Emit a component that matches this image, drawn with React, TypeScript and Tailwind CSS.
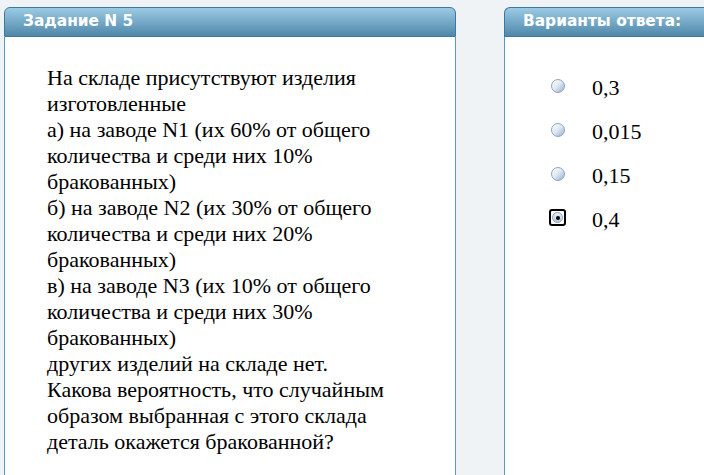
import React from "react";

const lines = [
  "На складе присутствуют изделия",
  "изготовленные",
  "а) на заводе N1 (их 60% от общего",
  "количества и среди них 10%",
  "бракованных)",
  "б) на заводе N2 (их 30% от общего",
  "количества и среди них 20%",
  "бракованных)",
  "в) на заводе N3 (их 10% от общего",
  "количества и среди них 30%",
  "бракованных)",
  "других изделий на складе нет.",
  "Какова вероятность, что случайным",
  "образом выбранная с этого склада",
  "деталь окажется бракованной?",
];

const answers = ["0,3", "0,015", "0,15", "0,4"];

function PanelHeader({ title, open }: { title: string; open?: boolean }) {
  return (
    <div
      className={`h-[30px] border border-[#3f77a0] bg-gradient-to-b from-[#9ccbe4] to-[#4f87aa] flex items-center pl-[18px] ${
        open ? "rounded-tl-[6px] border-r-0" : "rounded-t-[6px]"
      }`}
    >
      <span className="text-white font-bold text-[15.4px] [font-family:DejaVu_Sans,sans-serif]">
        {title}
      </span>
    </div>
  );
}

function Radio({ checked }: { checked: boolean }) {
  if (checked) {
    return (
      <span className="w-[17px] h-[17px] rounded-[3px] border-2 border-black flex items-center justify-center">
        <span className="w-[11px] h-[11px] rounded-full bg-gradient-to-b from-[#e9eef5] to-[#b7c8dc] border border-[#8aa1bb] flex items-center justify-center">
          <span className="w-[4px] h-[4px] rounded-full bg-black" />
        </span>
      </span>
    );
  }
  return (
    <span className="w-[17px] h-[17px] flex items-center justify-center">
      <span className="w-[14px] h-[14px] rounded-full bg-gradient-to-br from-[#ffffff] via-[#dde6f1] to-[#9ab0cb] border border-[#8ea5c1]" />
    </span>
  );
}

export default function App() {
  return (
    <div className="w-[704px] h-[475px] overflow-hidden bg-[#eff3f5] flex gap-[48px] pl-[4px] pt-[7px]">
      {/* Task */}
      <div className="w-[452px] flex flex-col shrink-0">
        <PanelHeader title="Задание N 5" />
        <div className="flex-1 bg-white border-x border-[#5b97bf] pl-[42px] pt-[28px] [font-family:Liberation_Serif,serif] text-[22px] leading-[26px] text-black">
          {lines.map((l, i) => (
            <div key={i}>{l}</div>
          ))}
        </div>
      </div>

      {/* Answers */}
      <div className="flex-1 flex flex-col">
        <PanelHeader title="Варианты ответа:" open />
        <div className="flex-1 bg-white border-l border-[#5b97bf] pl-[44px] pt-[40px] [font-family:Liberation_Serif,serif] text-[22px] text-black">
          {answers.map((a, i) => (
            <div key={a} className="h-[44px] flex items-start gap-[26px]">
              <Radio checked={i === 3} />
              <span className="leading-[26px] -mt-[2px]">{a}</span>
            </div>
          ))}
        </div>
      </div>
    </div>
  );
}
